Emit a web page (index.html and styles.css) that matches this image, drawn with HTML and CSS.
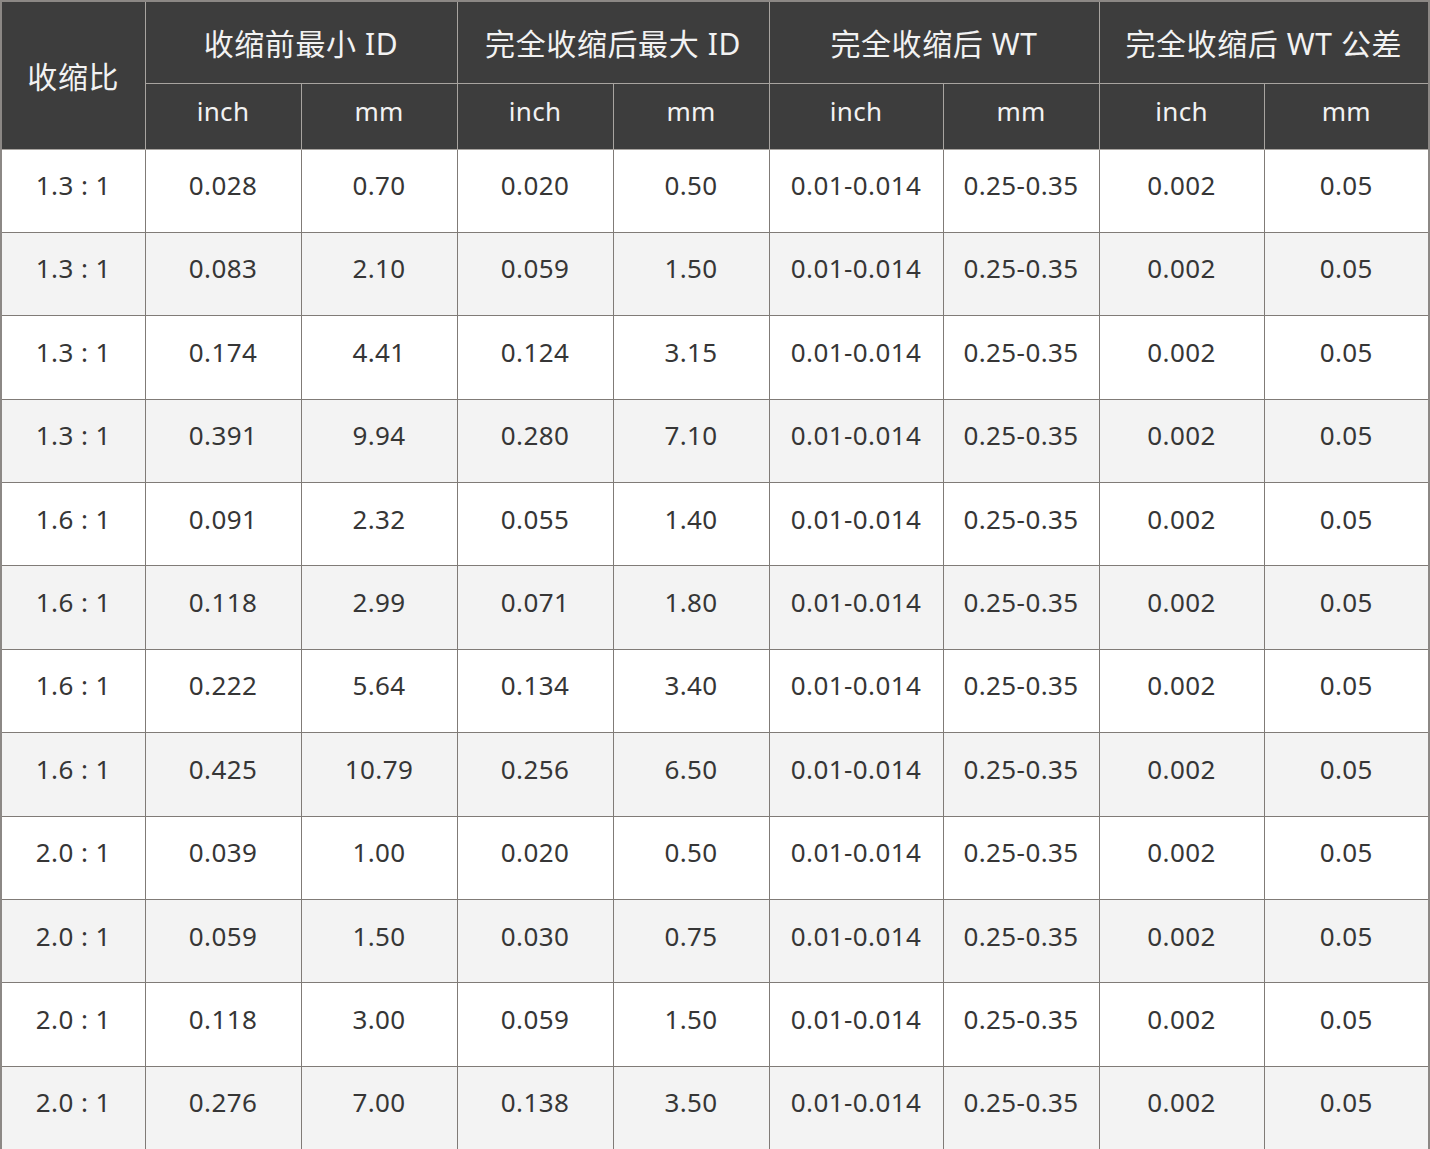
FILE: index.html
```html
<!DOCTYPE html>
<html lang="zh-CN">
<head>
<meta charset="utf-8">
<link rel="stylesheet" href="styles.css">
</head>
<body>
<table class="spec">
<colgroup>
<col class="c-ratio"><col class="c-n"><col class="c-n"><col class="c-n"><col class="c-n"><col class="c-w"><col class="c-n"><col class="c-t"><col class="c-t">
</colgroup>
<thead>
<tr class="h1">
<th rowspan="2">收缩比</th>
<th colspan="2">收缩前最小 ID</th>
<th colspan="2">完全收缩后最大 ID</th>
<th colspan="2">完全收缩后 WT</th>
<th colspan="2">完全收缩后 WT 公差</th>
</tr>
<tr class="h2">
<th>inch</th><th>mm</th><th>inch</th><th>mm</th><th>inch</th><th>mm</th><th>inch</th><th>mm</th>
</tr>
</thead>
<tbody>
<tr><td>1.3 : 1</td><td>0.028</td><td>0.70</td><td>0.020</td><td>0.50</td><td>0.01-0.014</td><td>0.25-0.35</td><td>0.002</td><td>0.05</td></tr>
<tr><td>1.3 : 1</td><td>0.083</td><td>2.10</td><td>0.059</td><td>1.50</td><td>0.01-0.014</td><td>0.25-0.35</td><td>0.002</td><td>0.05</td></tr>
<tr><td>1.3 : 1</td><td>0.174</td><td>4.41</td><td>0.124</td><td>3.15</td><td>0.01-0.014</td><td>0.25-0.35</td><td>0.002</td><td>0.05</td></tr>
<tr><td>1.3 : 1</td><td>0.391</td><td>9.94</td><td>0.280</td><td>7.10</td><td>0.01-0.014</td><td>0.25-0.35</td><td>0.002</td><td>0.05</td></tr>
<tr><td>1.6 : 1</td><td>0.091</td><td>2.32</td><td>0.055</td><td>1.40</td><td>0.01-0.014</td><td>0.25-0.35</td><td>0.002</td><td>0.05</td></tr>
<tr><td>1.6 : 1</td><td>0.118</td><td>2.99</td><td>0.071</td><td>1.80</td><td>0.01-0.014</td><td>0.25-0.35</td><td>0.002</td><td>0.05</td></tr>
<tr><td>1.6 : 1</td><td>0.222</td><td>5.64</td><td>0.134</td><td>3.40</td><td>0.01-0.014</td><td>0.25-0.35</td><td>0.002</td><td>0.05</td></tr>
<tr><td>1.6 : 1</td><td>0.425</td><td>10.79</td><td>0.256</td><td>6.50</td><td>0.01-0.014</td><td>0.25-0.35</td><td>0.002</td><td>0.05</td></tr>
<tr><td>2.0 : 1</td><td>0.039</td><td>1.00</td><td>0.020</td><td>0.50</td><td>0.01-0.014</td><td>0.25-0.35</td><td>0.002</td><td>0.05</td></tr>
<tr><td>2.0 : 1</td><td>0.059</td><td>1.50</td><td>0.030</td><td>0.75</td><td>0.01-0.014</td><td>0.25-0.35</td><td>0.002</td><td>0.05</td></tr>
<tr><td>2.0 : 1</td><td>0.118</td><td>3.00</td><td>0.059</td><td>1.50</td><td>0.01-0.014</td><td>0.25-0.35</td><td>0.002</td><td>0.05</td></tr>
<tr><td>2.0 : 1</td><td>0.276</td><td>7.00</td><td>0.138</td><td>3.50</td><td>0.01-0.014</td><td>0.25-0.35</td><td>0.002</td><td>0.05</td></tr>
</tbody>
</table>
</body>
</html>
```
FILE: styles.css
```css
html, body {
  margin: 0;
  padding: 0;
  background: #ffffff;
}
body {
  font-family: "Noto Sans", "Noto Sans CJK SC", sans-serif;
  color: #363636;
}
.spec {
  width: 1430px;
  border-collapse: collapse;
  table-layout: fixed;
  border: 2px solid #8c8885;
}
.c-ratio { width: 144px; }
.c-n { width: 156px; }
.c-w { width: 174px; }
.c-t { width: 165px; }
.spec th {
  background: #3d3d3d;
  color: #f2f2f2;
  font-weight: 400;
  border: 1px solid #a8a4a0;
  padding: 0;
  text-align: center;
  vertical-align: middle;
  line-height: 1.2;
}
.h1 { height: 82px; }
.h1 th { font-size: 30px; letter-spacing: 0.6px; padding-top: 4px; }
.h2 { height: 66px; }
.h2 th { font-size: 26px; letter-spacing: 0.3px; padding-bottom: 8px; }
.spec td {
  border: 1px solid #807b77;
  padding: 0 0 10px 0;
  text-align: center;
  vertical-align: middle;
  font-size: 26px;
  letter-spacing: 0.4px;
  line-height: 1.2;
  height: 72.4px;
}
.spec tbody tr:nth-child(even) td {
  background: #f3f3f3;
}
```
